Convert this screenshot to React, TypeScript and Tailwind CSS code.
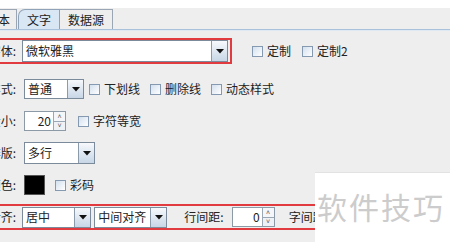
import React from "react";

const font = { fontFamily: '"Noto Sans CJK SC", "Liberation Sans", sans-serif' };

function Arrow() {
  return (
    <svg width="8" height="5" viewBox="0 0 8 5">
      <path d="M0 0 H8 L4 4.5 Z" fill="#111" />
    </svg>
  );
}

function Combo({ text, w, h = 21 }: { text: string; w: number; h?: number }) {
  return (
    <div
      className="flex border border-[#7b8b9c] bg-white"
      style={{ width: w, height: h }}
    >
      <div className="flex flex-1 items-center pl-[3px] text-[12px] text-[#222]">{text}</div>
      <div className="flex w-[16px] items-center justify-center border-l border-[#8b9bab] bg-gradient-to-b from-[#f7f9fc] to-[#c7d6e6]">
        <Arrow />
      </div>
    </div>
  );
}

function Spinner({ value, w }: { value: string; w: number }) {
  return (
    <div className="flex h-[20px] border border-[#8c9aa8] bg-white" style={{ width: w }}>
      <div className="flex flex-1 items-center justify-end pr-[2px] text-[12px] text-[#222]">{value}</div>
      <div className="flex w-[12px] flex-col border-l border-[#9aa8b6]">
        <div className="flex flex-1 items-center justify-center border-b border-[#9aa8b6] bg-[#f4f6f9] text-[7px] leading-none text-[#555]">
          ˄
        </div>
        <div className="flex flex-1 items-center justify-center bg-[#eef1f5] text-[7px] leading-none text-[#555]">
          ˅
        </div>
      </div>
    </div>
  );
}

function Check({ label }: { label: string }) {
  return (
    <div className="flex items-center gap-[4px] text-[12px] text-[#222]">
      <div className="h-[11px] w-[11px] border border-[#8599b0] bg-gradient-to-br from-[#d3e0ee] to-white" />
      <span>{label}</span>
    </div>
  );
}

function Label({ text }: { text: string }) {
  return (
    <div className="flex w-[22px] shrink-0 justify-end whitespace-nowrap pr-[6px] text-[12px] text-[#222]">
      {text}
    </div>
  );
}

export default function App() {
  return (
    <div className="relative h-[242px] w-[450px] overflow-hidden bg-[#eeeeee]" style={font}>
      <div className="h-[8px] overflow-hidden bg-white">
        <div className="-mt-[16px] pl-[3px] text-[12px] text-[#222]">文本属性编辑</div>
      </div>

      <div className="flex h-[21px] items-end pt-[1px] text-[12px] text-[#222]">
        <div className="flex h-[20px] w-[17px] items-center justify-end overflow-visible whitespace-nowrap border-r border-t border-[#9aa6b3] pr-[6px]">
          基本
        </div>
        <div className="ml-[1px] flex h-[20px] w-[42px] items-center justify-center rounded-tl-[7px] border-l border-r border-t border-[#8ea2b8] bg-[#d9e6f3]">
          文字
        </div>
        <div className="flex h-[20px] w-[53px] items-center justify-center border-r border-t border-[#9aa6b3]">
          数据源
        </div>
      </div>
      <div className="h-[2px] border-t border-[#a9c1da] bg-[#dfe9f4]" />

      <div className="flex flex-col pt-[7px]">
        <div className="flex items-center">
          <div className="flex h-[26px] w-[232px] items-center border-2 border-l-0 border-[#e23b3f]">
            <Label text="字体:" />
            <Combo text="微软雅黑" w={206} h={22} />
          </div>
          <div className="ml-[20px] flex items-center gap-[11px]">
            <Check label="定制" />
            <Check label="定制2" />
          </div>
        </div>

        <div className="mt-[15px] flex h-[20px] items-center">
          <Label text="样式:" />
          <div className="ml-[2px]">
            <Combo text="普通" w={60} h={20} />
          </div>
          <div className="ml-[5px] flex items-center gap-[10px]">
            <Check label="下划线" />
            <Check label="删除线" />
            <Check label="动态样式" />
          </div>
        </div>

        <div className="mt-[12px] flex h-[20px] items-center">
          <Label text="大小:" />
          <div className="ml-[2px]">
            <Spinner value="20" w={42} />
          </div>
          <div className="ml-[12px]">
            <Check label="字符等宽" />
          </div>
        </div>

        <div className="mt-[11px] flex h-[22px] items-center">
          <Label text="排版:" />
          <div className="ml-[2px]">
            <Combo text="多行" w={71} h={22} />
          </div>
        </div>

        <div className="mt-[11px] flex h-[20px] items-center">
          <Label text="颜色:" />
          <div className="ml-[2px] h-[20px] w-[21px] border border-[#555] bg-black" />
          <div className="ml-[10px]">
            <Check label="彩码" />
          </div>
        </div>

        <div className="mt-[9px] flex h-[26px] w-[330px] items-center border-2 border-l-0 border-[#e23b3f]">
          <Label text="对齐:" />
          <Combo text="居中" w={70} />
          <div className="ml-[3px]">
            <Combo text="中间对齐" w={73} />
          </div>
          <div className="ml-[17px] whitespace-nowrap text-[12px] text-[#222]">行间距:</div>
          <div className="ml-[8px]">
            <Spinner value="0" w={43} />
          </div>
          <div className="ml-[14px] whitespace-nowrap text-[12px] text-[#222]">字间距:</div>
        </div>
      </div>

      <div className="absolute left-[315px] top-[172px] flex h-[70px] w-[135px] items-start border-t border-[#e2e2e2] bg-white pl-[2px] pt-[18px]">
        <span className="text-[30px] leading-none tracking-[2px] text-[#cccccc]">软件技巧</span>
      </div>
    </div>
  );
}
